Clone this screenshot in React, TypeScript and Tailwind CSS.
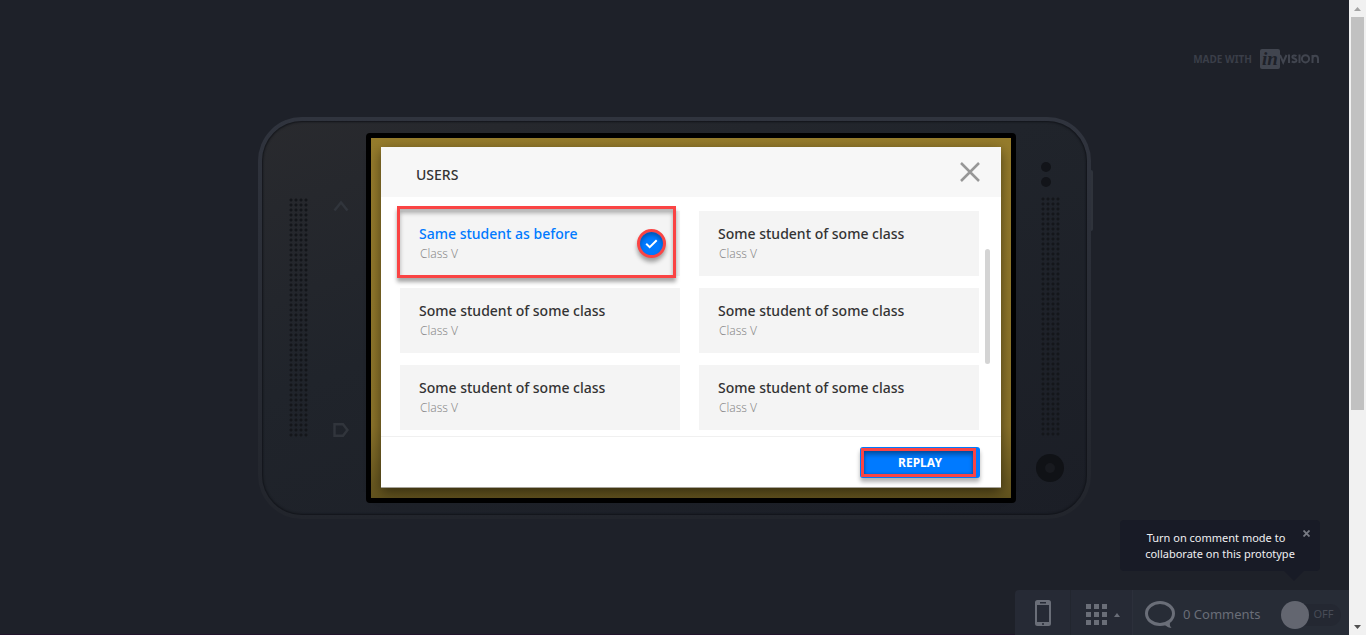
import React, { useState } from "react";

type Student = { name: string; grade: string };

const students: Student[] = [
  { name: "Same student as before", grade: "Class V" },
  { name: "Some student of some class", grade: "Class V" },
  { name: "Some student of some class", grade: "Class V" },
  { name: "Some student of some class", grade: "Class V" },
  { name: "Some student of some class", grade: "Class V" },
  { name: "Some student of some class", grade: "Class V" },
];

function Brand() {
  return (
    <header className="flex justify-end pt-[49px] pr-[30px]">
      <a href="#invision" className="flex h-5 items-center text-[#41454f]">
        <span className="mr-2 text-[10px] font-bold text-[#3a3e48]">MADE WITH</span>
        <span className="flex h-5 w-5 items-center justify-center rounded-xs bg-[#41454f] font-['Liberation_Serif',serif] text-[19px] leading-5 font-bold text-[#1e2129] italic">
          in
        </span>
        <svg width="39" height="20" viewBox="0 0 39 20" aria-label="vision" role="img">
          <g fill="none" stroke="currentColor" strokeWidth="2">
            <path d="M0 6 3.200 13.500 6.500 6" />
            <path d="M9 5.500v8.500" />
            <path d="M16.500 7c-1.600-.9-4.200-.8-4.200.9 0 2 4.200 1.300 4.200 3.600 0 2-3 2-4.700.9" />
            <path d="M19.500 5.500v8.500" />
            <circle cx="25.500" cy="9.800" r="3.600" />
            <path d="M32.500 14V6M32.500 10c0-4.500 5.500-4.500 5.500 0v4" />
          </g>
        </svg>
      </a>
    </header>
  );
}

function Speaker() {
  return (
    <div className="h-60 w-5 bg-[radial-gradient(circle_at_2px_2px,#14161a_1px,transparent_2px)] bg-[length:5px_5px]" />
  );
}

function StudentCard({
  student,
  selected,
  onSelect,
}: {
  student: Student;
  selected: boolean;
  onSelect: () => void;
}) {
  return (
    <button
      type="button"
      aria-pressed={selected}
      onClick={onSelect}
      className="relative flex h-[65px] flex-col items-start bg-[#f4f4f4] pt-[13px] pl-[19px] text-left"
    >
      <span
        className={
          selected
            ? "text-sm leading-5 font-medium text-[#007aff]"
            : "text-sm leading-5 font-medium text-[#333333]"
        }
      >
        {student.name}
      </span>
      <span className="pl-px text-xs leading-5 font-light text-[#8c8c8c]">{student.grade}</span>
      {selected && (
        <>
          <span className="absolute -top-[5px] right-1 -bottom-0.5 -left-[3px] border-3 border-[#fa4444] shadow-[0_4px_4px_rgba(0,0,0,0.35),inset_0_4px_4px_rgba(0,0,0,0.3)]" />
          <span className="absolute top-[18px] right-3.5 flex h-[29px] w-[29px] items-center justify-center rounded-full border-3 border-[#fa4444] bg-[#007aff] shadow-[0_4px_4px_rgba(0,0,0,0.35),inset_0_3px_4px_rgba(0,0,0,0.3)]">
            <svg width="13" height="10" viewBox="0 0 13 10" fill="none" stroke="white" strokeWidth="2">
              <path d="M1.200 4.700 4.700 8.200 11.700 1.200" />
            </svg>
          </span>
        </>
      )}
    </button>
  );
}

function UsersDialog() {
  const [selected, setSelected] = useState(0);
  return (
    <section
      aria-labelledby="users-title"
      className="flex w-[620px] flex-col bg-white shadow-[0_4px_12px_rgba(0,0,0,0.5)]"
    >
      <div className="flex h-[50px] items-center justify-between bg-[#f7f7f7] pr-5 pl-[35px]">
        <h1 id="users-title" className="pt-1.5 text-sm font-medium text-[#333333]">
          USERS
        </h1>
        <button type="button" aria-label="Close">
          <svg width="22" height="22" viewBox="0 0 22 22" fill="none" stroke="#979797" strokeWidth="2.500">
            <path d="M2 2 20 20M20 2 2 20" />
          </svg>
        </button>
      </div>
      <div className="flex h-[239px] gap-1.5 pt-3.5 pl-[19px]">
        <div className="grid w-[579px] grid-cols-2 content-start gap-x-[19px] gap-y-3">
          {students.map((s, i) => (
            <StudentCard key={i} student={s} selected={i === selected} onSelect={() => setSelected(i)} />
          ))}
        </div>
        <div className="mt-[38px] h-[115px] w-[5px] rounded-full bg-[#d4d4d4]" />
      </div>
      <div className="flex h-[52px] items-start justify-end border-t border-b border-t-[#f0f0f0] border-b-[#a6a39a] pt-2.5 pr-[21px]">
        <button
          type="button"
          className="relative h-[31px] w-[120px] rounded-[3px] bg-[#007aff] text-xs font-bold text-white shadow-[0_4px_4px_rgba(0,0,0,0.3)]"
        >
          <span className="absolute top-px right-1 bottom-px left-px border-3 border-[#fa4444] shadow-[inset_0_4px_4px_rgba(0,0,0,0.3),inset_0_0_3px_rgba(0,0,0,0.25)]" />
          <span className="relative">REPLAY</span>
        </button>
      </div>
    </section>
  );
}

function Device() {
  return (
    <div className="relative mt-12 self-center">
      <div className="absolute top-[53px] -right-0.5 h-[61px] w-2 rounded-r-xs bg-[#2f333b]" />
      <div className="relative rounded-[44px] bg-linear-to-b from-[#30343e] to-[#22252c] p-1">
        <div className="flex rounded-[40px] bg-linear-160 from-[#292a2e] via-[#20242b] via-40% to-[#1b1e26] py-3 pr-[71px] pl-[27px] shadow-[inset_0_0_2px_1px_rgba(16,18,23,0.9)]">
          <div className="flex w-[77px] gap-6 pt-[65px]">
            <Speaker />
            <div className="flex h-60 flex-col justify-between pt-0.5 pb-px text-[#31353c]">
              <svg width="16" height="12" viewBox="0 0 16 12" fill="none" stroke="currentColor" strokeWidth="2.500">
                <path d="m1.500 10.500 6.500-8 6.500 8" />
              </svg>
              <svg width="16" height="14" viewBox="0 0 16 14" fill="none" stroke="currentColor" strokeWidth="2.500">
                <path d="M1.500 1.300h8.500l4.500 5.700-4.500 5.700H1.500z" />
              </svg>
            </div>
          </div>
          <div className="relative rounded border-5 border-black bg-linear-to-b from-[#967c2c] via-[#8b732a] via-80% to-[#62531e] px-2.5 pt-[9px] pb-2.5">
            <UsersDialog />
          </div>
          <div className="relative w-0">
            <div className="absolute top-[29px] left-[25px] flex w-7 flex-col gap-[5px]">
              <span className="h-2.5 w-2.5 rounded-full bg-[#121419]" />
              <span className="h-2.5 w-2.5 rounded-full bg-[#121419]" />
            </div>
            <div className="absolute top-16 left-[25px]">
              <Speaker />
            </div>
            <div className="absolute top-[321px] left-5 flex h-7 w-7 items-center justify-center rounded-full bg-[#101216]">
              <span className="h-2.5 w-2.5 rounded-full bg-[#181a1f]" />
            </div>
          </div>
        </div>
      </div>
    </div>
  );
}

function Toolbar() {
  const [comments, setComments] = useState(false);
  const [tip, setTip] = useState(true);
  return (
    <div className="relative mt-auto flex h-[45px] self-end rounded-tl bg-[#262a35] text-[#6a6e78]">
      {tip && (
        <div className="absolute right-[29px] bottom-[64px] flex h-[51px] w-[200px] items-center justify-center rounded bg-[#181b26] text-center text-[11px] leading-4 text-[#f0f0f2]">
          <p>
            <span className="block pr-2">Turn on comment mode to</span>
            <span className="block">collaborate on this prototype</span>
          </p>
          <button type="button" aria-label="Dismiss" onClick={() => setTip(false)} className="absolute top-2.5 right-2.5">
            <svg width="7" height="7" viewBox="0 0 7 7" stroke="#777a83" strokeWidth="1.800">
              <path d="m.5.500 6 6M6.500.500l-6 6" />
            </svg>
          </button>
          <svg className="absolute top-full right-4" width="20" height="10" viewBox="0 0 20 10" fill="#181b26">
            <path d="M0 0h20L10 10z" />
          </svg>
        </div>
      )}
      <button type="button" aria-label="Device preview" className="flex w-14 items-center justify-center border-r border-[#22262f]">
        <svg width="16" height="26" viewBox="0 0 16 26">
          <path
            fill="currentColor"
            fillRule="evenodd"
            d="M2.500 0h11A2.500 2.500 0 0 1 16 2.500v21a2.500 2.500 0 0 1-2.500 2.500h-11A2.500 2.500 0 0 1 0 23.500v-21A2.500 2.500 0 0 1 2.500 0zM2 5v17h12V5zM5 2v1.500h6V2zM7 23.300v1.500h2v-1.500z"
          />
        </svg>
      </button>
      <button type="button" aria-label="Screens" className="flex w-[62px] items-center gap-[7px] border-r border-[#2c303b] pt-1 pl-[15px]">
        <svg width="21" height="21" viewBox="0 0 21 21" fill="currentColor">
          <path d="M0 0h5v5H0zM8 0h5v5H8zM16 0h5v5h-5zM0 8h5v5H0zM8 8h5v5H8zM16 8h5v5h-5zM0 16h5v5H0zM8 16h5v5H8zM16 16h5v5h-5z" />
        </svg>
        <svg width="6" height="4" viewBox="0 0 6 4" fill="currentColor">
          <path d="M0 4h6L3 0z" />
        </svg>
      </button>
      <div className="flex w-[216px] items-center bg-[#272c36] pt-1 pl-3">
        <svg width="31" height="27" viewBox="0 0 31 27">
          <ellipse cx="15" cy="12.500" rx="13.500" ry="11" fill="none" stroke="currentColor" strokeWidth="3" />
          <path d="M18 23.500c2 0 5 3.500 8.500 3.500-1.500-1.500-2-3-1.500-5.500z" fill="currentColor" />
        </svg>
        <span className="ml-[7px] text-[13px]">0 Comments</span>
        <label className="ml-5 flex h-7 w-[60px] items-center">
          <input
            type="checkbox"
            aria-label="Comment mode"
            checked={comments}
            onChange={() => setComments(!comments)}
            className="sr-only"
          />
          <span className="relative flex h-[22px] w-[60px] items-center justify-end rounded-full bg-[#242832] pr-[7px] text-[11px] text-[#484c57]">
            OFF
            <span className="absolute -top-[3px] left-0 h-7 w-7 rounded-full bg-[#636670]" />
          </span>
        </label>
      </div>
    </div>
  );
}

function PageScrollbar() {
  return (
    <div className="flex w-[17px] shrink-0 flex-col items-center bg-[#f1f1f1]" aria-hidden="true">
      <div className="flex h-[17px] items-center">
        <svg width="7" height="4" viewBox="0 0 7 4" fill="#a3a3a3">
          <path d="M0 4h7L3.500 0z" />
        </svg>
      </div>
      <div className="h-[393px] w-[13px] bg-[#c1c1c1]" />
      <div className="mt-auto flex h-[17px] items-center">
        <svg width="7" height="4" viewBox="0 0 7 4" fill="#505050">
          <path d="M0 0h7L3.500 4z" />
        </svg>
      </div>
    </div>
  );
}

export default function App() {
  return (
    <div className="flex min-h-screen bg-[#1e2129] font-['Noto_Sans','Open_Sans',sans-serif]">
      <main className="flex flex-1 flex-col shadow-[inset_0_-1px_0_#21142b]">
        <Brand />
        <Device />
        <Toolbar />
      </main>
      <PageScrollbar />
    </div>
  );
}
